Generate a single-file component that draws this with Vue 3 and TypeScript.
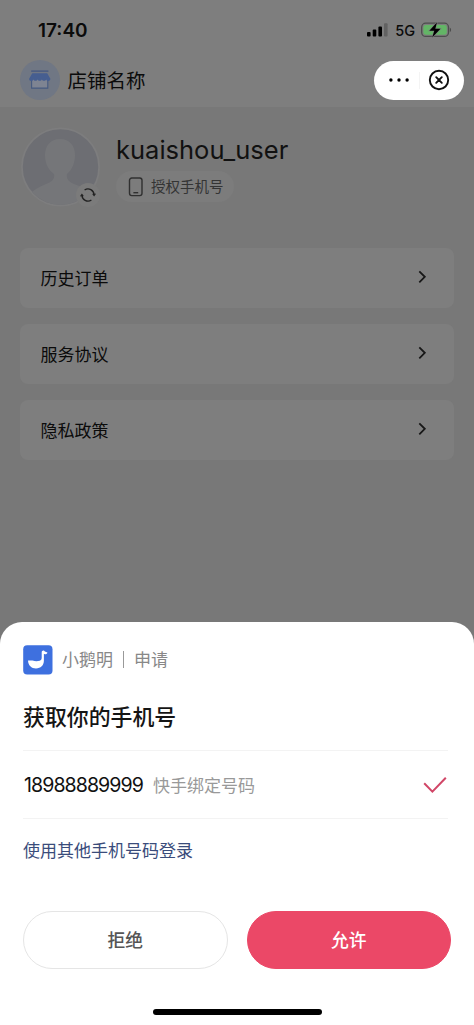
<script setup lang="ts">
const entries: string[] = ['历史订单', '服务协议', '隐私政策']
</script>

<template>
  <div class="screen">
    <header class="top">
      <div class="status">
        <span class="time">17:40</span>
        <div class="status-right">
          <svg class="signal" width="21" height="14" viewBox="0 0 21 14">
            <rect x="0" y="9" width="3.6" height="4.5" rx="1" />
            <rect x="5.7" y="6.5" width="3.6" height="7" rx="1" />
            <rect x="11.4" y="3.6" width="3.6" height="9.9" rx="1" />
            <rect x="17" y="0.3" width="3.6" height="13.2" rx="1" fill="#626262" />
          </svg>
          <span class="network">5G</span>
          <svg class="battery" width="31" height="18" viewBox="0 0 31 18">
            <rect x="0.7" y="2.2" width="26.8" height="13.2" rx="4" fill="none" stroke="#4d4d4d" stroke-width="1.3" />
            <rect x="2.4" y="3.9" width="23.4" height="9.8" rx="2.4" fill="#63b566" />
            <path d="M28.8 6.8v4.2c1.7-.5 1.7-3.7 0-4.2z" fill="#4d4d4d" />
            <path d="M16 1.2 8.3 9.7h5L11.2 16.4 19.5 7.8h-5.2z" fill="#000" stroke="#7e7e7e" stroke-width="1.2" paint-order="stroke" />
          </svg>
        </div>
      </div>
      <div class="nav">
        <div class="shop-icon">
          <svg width="22" height="20" viewBox="0 0 22 20">
            <path d="M2.2 1.1h17.2" stroke="#3f5482" stroke-width="1.2" />
            <path d="M2.6 9.5v8.6h16.2V9.5" fill="#7e8492" stroke="#465a80" stroke-width="1.1" />
            <path d="M3.3 3.2h14.9l3.2 5.6c0 2.8-4 3-4.2.4-.4 2.2-4 2.2-4.3 0-.4 2.2-3.9 2.2-4.3 0-.4 2.2-3.9 2.2-4.2 0C4 11.8 0 11.6.1 8.8z" fill="#465e90" />
          </svg>
        </div>
        <h1 class="shop-name">店铺名称</h1>
        <div class="capsule">
          <svg class="dots" width="22" height="6" viewBox="0 0 22 6">
            <circle cx="1.9" cy="3" r="1.7" />
            <circle cx="10" cy="3" r="1.7" />
            <circle cx="18.1" cy="3" r="1.7" />
          </svg>
          <i class="capsule-line"></i>
          <svg class="close" width="22" height="22" viewBox="0 0 22 22" fill="none" stroke="#111">
            <circle cx="11" cy="11" r="9.2" stroke-width="1.9" />
            <path d="m8.2 8.2 5.6 5.6m0-5.6-5.6 5.6" stroke-width="1.9" stroke-linecap="round" />
          </svg>
        </div>
      </div>
    </header>

    <main class="content">
      <section class="profile">
        <div class="avatar">
          <svg width="80" height="80" viewBox="0 0 80 80">
            <defs><clipPath id="portrait"><circle cx="39.5" cy="40" r="38" /></clipPath></defs>
            <circle cx="39.5" cy="40" r="38.6" fill="#6d6e73" stroke="#7d7d7e" stroke-width="1.8" />
            <path clip-path="url(#portrait)" d="M39 12c10 0 15 7 15 16 0 8-3 15-8 19-1 5 2 8 7 10 9 3 15 6 18 11v12H8V68c4-5 10-8 17-11 6-2 9-5 8-10-6-4-9-11-9-19 0-9 5-16 15-16z" fill="#757679" />
          </svg>
          <div class="refresh">
            <svg width="16" height="16" viewBox="0 0 16 16" fill="none" stroke="#222" stroke-width="1.4">
              <path d="M4.6 3A6 6 0 0 1 14 8M11.4 13A6 6 0 0 1 2 8" />
              <path d="m12.8 6.9 1.3 1.6 1.3-1.8M.6 9.300 1.900 7.500l1.300 1.600" stroke-width="1.200" />
            </svg>
          </div>
        </div>
        <div class="profile-info">
          <div class="username">kuaishou_user</div>
          <div class="authorize">
            <svg width="16" height="20" viewBox="0 0 16 20" fill="none" stroke="#303030" stroke-width="1.4">
              <rect x="1.5" y="1" width="12.5" height="17.6" rx="2.3" />
              <path d="M5.4 15.7h4.8" />
            </svg>
            <span>授权手机号</span>
          </div>
        </div>
      </section>
      <nav class="entries">
        <div v-for="entry in entries" :key="entry" class="entry">
          <span>{{ entry }}</span>
          <svg width="9" height="14" viewBox="0 0 9 14" fill="none" stroke="#171717" stroke-width="1.8">
            <path d="m1.3 1.300 5.500 5.500-5.500 5.500" />
          </svg>
        </div>
      </nav>
    </main>

    <section class="sheet">
      <div class="requester">
        <svg width="30" height="30" viewBox="0 0 30 30">
          <rect x="0.2" y="0.2" width="29.3" height="29.3" rx="4" fill="#3e70df" />
          <path d="M5 15.5h4.500c2.500.9 5 .9 7.200.2 1.300-.5 2-1.500 2-3V7.500c0-1.400.9-2.100 2.200-1.900l1 .9 2.500.9c-.1 1.500-1.200 1.900-3.500 1.700v6.500c0 4.900-3.200 7.900-7.900 7.900-4.600 0-7.800-3.100-8-8z" fill="#fff" />
        </svg>
        <span class="app-name">小鹅明</span>
        <i></i>
        <span>申请</span>
      </div>
      <h2>获取你的手机号</h2>
      <div class="phone">
        <span class="number">18988889999</span>
        <span class="binding">快手绑定号码</span>
        <svg width="24" height="18" viewBox="0 0 24 18" fill="none" stroke="#d14667" stroke-width="2">
          <path d="m1.2 7.200 8.200 8.400L22.800 1.700" />
        </svg>
      </div>
      <a class="other">使用其他手机号码登录</a>
      <div class="actions">
        <button class="deny">拒绝</button>
        <button class="allow">允许</button>
      </div>
      <div class="home-bar"></div>
    </section>
  </div>
</template>

<style>
body {
  margin: 0;
}
</style>

<style scoped>
* {
  box-sizing: border-box;
}
.screen {
  width: 474px;
  height: 1025px;
  display: flex;
  flex-direction: column;
  overflow: hidden;
  background: #787878;
  font-family: "Inter", "Noto Sans CJK SC", sans-serif;
  color: #0b0b0b;
}
.top {
  height: 107px;
  flex: none;
  background: #7e7e7e;
}
.status {
  height: 60px;
  padding: 0 22px 0 38px;
  display: flex;
  align-items: center;
  justify-content: space-between;
}
.time {
  padding-top: 2px;
  font-size: 19px;
  font-weight: 600;
  line-height: 24px;
}
.status-right {
  display: flex;
  align-items: center;
}
.network {
  margin: 1px 6px 0 7px;
  font-size: 14.5px;
  font-weight: 500;
  line-height: 18px;
}
.nav {
  height: 40px;
  padding: 0 10px 0 20px;
  display: flex;
  align-items: center;
}
.shop-icon {
  width: 40px;
  height: 40px;
  border-radius: 50%;
  background: #707784;
  display: flex;
  align-items: center;
  justify-content: center;
}
.shop-name {
  margin: 0 auto 0 7.5px;
  padding-top: 2px;
  font-size: 19.5px;
  font-weight: 400;
  line-height: 28px;
}
.capsule {
  width: 90px;
  height: 39px;
  border-radius: 20px;
  background: #fff;
  padding: 0 14px 0 15px;
  display: flex;
  align-items: center;
  justify-content: space-between;
}
.capsule-line {
  width: 1px;
  height: 17px;
  background: #f4f4f4;
}
.content {
  height: 515px;
  flex: none;
  padding: 20px 20px 0;
}
.profile {
  height: 81px;
  display: flex;
}
.avatar {
  position: relative;
  width: 80px;
  height: 80px;
  margin-left: 1px;
}
.avatar > svg {
  display: block;
}
.refresh {
  position: absolute;
  right: 1px;
  bottom: 0;
  width: 24px;
  height: 24px;
  border-radius: 50%;
  background: #7b7b7b;
  display: flex;
  align-items: center;
  justify-content: center;
}
.profile-info {
  margin-left: 15px;
}
.username {
  height: 44px;
  font-size: 25.5px;
  line-height: 45px;
  color: #111;
}
.authorize {
  width: 118px;
  height: 31px;
  padding-left: 12px;
  border-radius: 16px;
  background: #7c7c7c;
  color: #343434;
  font-size: 14.5px;
  line-height: 22px;
  display: flex;
  align-items: center;
  gap: 7px;
}
.entries {
  margin-top: 40px;
  display: flex;
  flex-direction: column;
  gap: 16px;
}
.entry {
  height: 60px;
  padding: 0 27px 0 20.5px;
  border-radius: 8px;
  background: #7e7e7e;
  display: flex;
  align-items: center;
  justify-content: space-between;
  font-size: 17px;
  line-height: 24px;
}
.entry span {
  padding-top: 2px;
}
.entry svg {
  margin-bottom: 3px;
}
.sheet {
  height: 403px;
  flex: none;
  padding: 23px 23px 0;
  background: #fff;
  border-radius: 22px 22px 0 0;
}
.requester {
  height: 30px;
  display: flex;
  align-items: center;
  font-size: 17px;
  line-height: 24px;
  color: #888;
}
.app-name {
  margin-left: 9px;
}
.requester i {
  width: 1px;
  height: 17px;
  margin: 0 10px 2px;
  background: #999;
}
h2 {
  height: 76px;
  margin: 0 3px 0 0;
  padding-top: 24px;
  font-size: 21.9px;
  line-height: 36px;
  font-weight: 500;
  color: #151515;
  border-bottom: 1px solid #f3f3f3;
}
.phone {
  height: 68px;
  margin-right: 3px;
  display: flex;
  align-items: center;
  border-bottom: 1px solid #f3f3f3;
}
.number {
  width: 120px;
  margin-left: 1px;
  font-size: 19.6px;
  line-height: 28px;
  letter-spacing: -0.95px;
  color: #111;
}
.binding {
  margin-left: 9px;
  padding-top: 2px;
  font-size: 17px;
  line-height: 24px;
  color: #999;
}
.phone svg {
  margin: 1px 1px 0 auto;
}
.other {
  display: block;
  height: 92px;
  padding-top: 20px;
  font-size: 17px;
  line-height: 24px;
  color: #3a4c7b;
}
.actions {
  display: flex;
  gap: 19px;
}
button {
  flex: 1;
  height: 58px;
  padding: 1px 0 0;
  border: 1px solid #e5e5e5;
  border-radius: 29px;
  background: #fff;
  font: 500 17.8px/28px "Inter", "Noto Sans CJK SC", sans-serif;
  color: #555;
}
.allow {
  color: #fff;
  background: #eb4867;
  border-color: #eb4867;
}
.home-bar {
  width: 169px;
  height: 6px;
  margin: 40px auto 0;
  border-radius: 3px;
  background: #000;
}
</style>
